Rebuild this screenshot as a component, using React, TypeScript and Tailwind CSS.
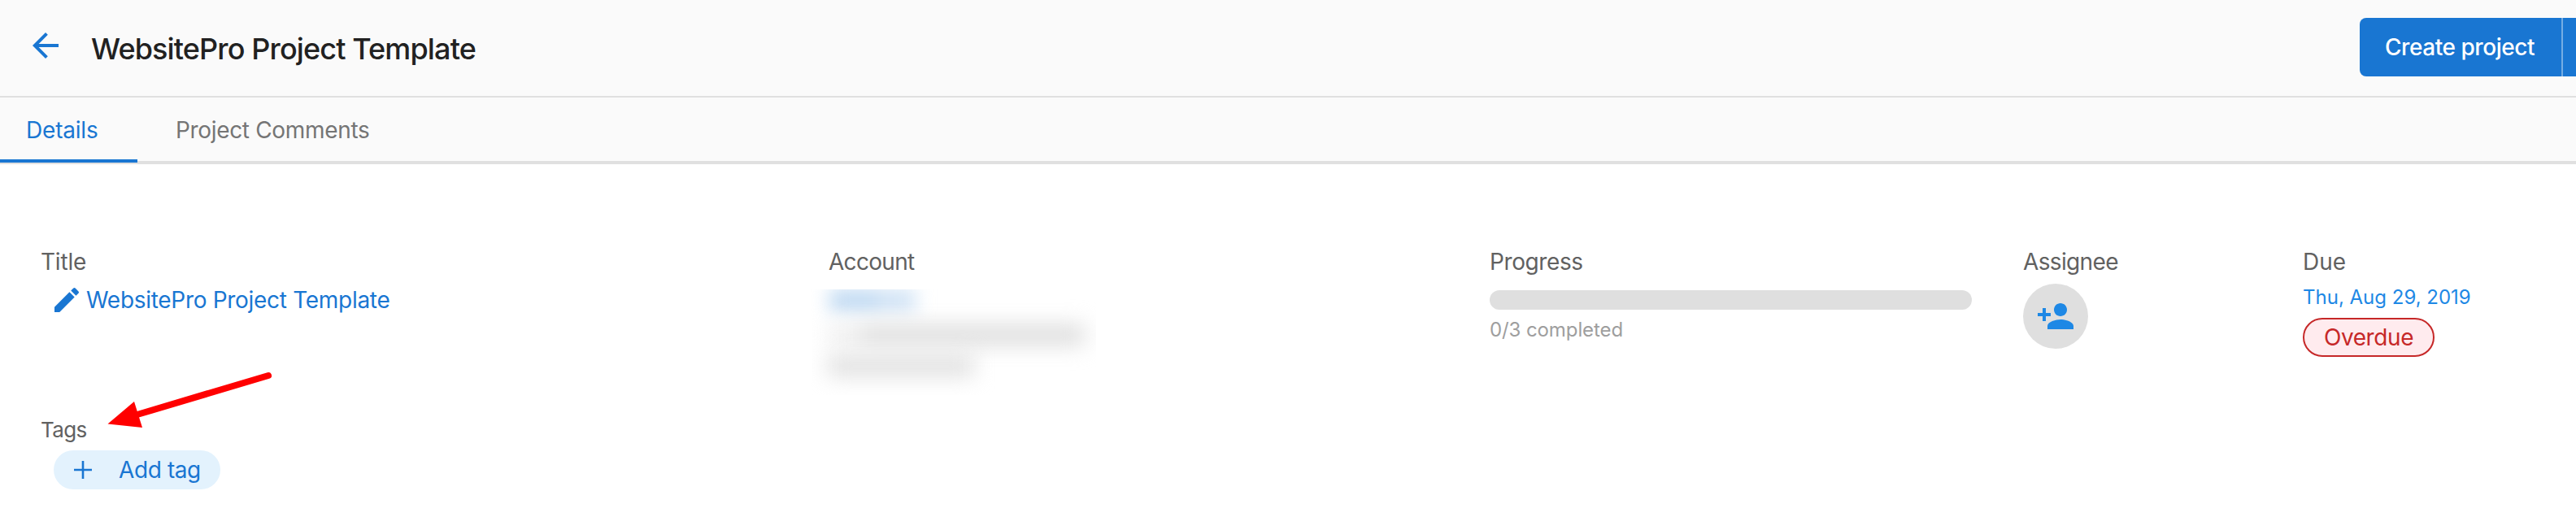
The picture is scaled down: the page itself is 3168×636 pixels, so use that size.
import type { ReactNode } from 'react';

function Field({ label, className, labelClassName = 'tracking-[-0.4px]', children }: { label: string; className: string; labelClassName?: string; children: ReactNode }) {
  return (
    <section className={`shrink-0 ${className}`}>
      <h2 className={`text-[28px] leading-7 text-[#616161] ${labelClassName}`}>{label}</h2>
      {children}
    </section>
  );
}

function BackIcon() {
  return (
    <svg viewBox="0 0 24 24" className="size-12 fill-[#1976d2]">
      <path d="M20 11H7.83l5.59-5.59L12 4l-8 8 8 8 1.41-1.41L7.83 13H20v-2z" />
    </svg>
  );
}

function EditIcon() {
  return (
    <svg viewBox="0 0 24 24" className="size-10 shrink-0 fill-[#1976d2]">
      <path d="M3 17.25V21h3.75L17.81 9.94l-3.75-3.75L3 17.25zM20.71 7.04a.996.996 0 0 0 0-1.41l-2.34-2.34a.996.996 0 0 0-1.41 0l-1.83 1.83 3.75 3.75 1.83-1.83z" />
    </svg>
  );
}

function PersonAddIcon() {
  return (
    <svg viewBox="0 0 24 24" className="size-12 fill-[#1e88e5]">
      <path d="M15 12c2.21 0 4-1.79 4-4s-1.79-4-4-4-4 1.79-4 4 1.79 4 4 4zm-9-2V7H4v3H1v2h3v3h2v-3h3v-2H6zm9 4c-2.67 0-8 1.34-8 4v2h16v-2c0-2.66-5.33-4-8-4z" />
    </svg>
  );
}

function Header() {
  return (
    <header className="flex h-[120px] items-start border-b-2 border-[#e0e0e0] bg-[#fafafa]">
      <button className="ml-8 mt-8" aria-label="Back">
        <BackIcon />
      </button>
      <h1 className="ml-8 mt-[42px] whitespace-nowrap text-[36px] font-[540] leading-9 tracking-[-0.87px] text-[#212121]">
        WebsitePro Project Template
      </h1>
      <div className="ml-auto mt-[22px] flex h-[72px] w-[266px] overflow-hidden rounded-l-lg bg-[#1976d2]">
        <button className="flex w-[248px] items-start whitespace-nowrap pl-[31px] pt-[22px] text-[28px] font-medium leading-7 tracking-[-0.45px] text-white">
          Create project
        </button>
        <span className="w-0.5 bg-[#75ade4]" />
      </div>
    </header>
  );
}

function Tabs() {
  return (
    <nav className="flex h-[82px] items-start border-b-4 border-[#e0e0e0] bg-[#fafafa] text-[28px] leading-7">
      <button className="h-20 w-[169px] shrink-0 border-b-4 border-[#1976d2] pl-8 pt-1 text-left tracking-[-0.2px] text-[#1976d2]">
        Details
      </button>
      <button className="ml-[47px] mt-[26px] whitespace-nowrap tracking-[-0.33px] text-[#757575]">Project Comments</button>
    </nav>
  );
}

export default function App() {
  return (
    <div className="h-[636px] w-[3168px] overflow-hidden bg-white font-['Inter',sans-serif]">
      <Header />
      <Tabs />
      <main className="relative pl-[50px] pt-[106px]">
        <div className="flex h-[207px] items-start">
          <Field label="Title" className="w-[969px]" labelClassName="tracking-[-0.2px]">
            <div className="ml-3 mt-[13px] flex items-start">
              <EditIcon />
              <a className="ml-1 mt-[6px] whitespace-nowrap text-[28px] leading-7 tracking-[-0.3px] text-[#1976d2]">
                WebsitePro Project Template
              </a>
            </div>
          </Field>
          <Field label="Account" className="w-[813px]" labelClassName="tracking-[-0.7px]">
            <div className="-ml-[21px] mt-5 h-[130px] w-[350px] overflow-hidden">
              <div className="ml-[22px] flex h-[27px] w-[106px] blur-[11px]">
                <div className="w-[60px] bg-[#bfd9f2]" />
                <div className="flex-1 bg-[#cfe2f5]" />
              </div>
              <div className="ml-5 mt-4 flex h-[26px] w-[316px] blur-[13px]">
                <div className="w-10 bg-[#efefef]" />
                <div className="flex-1 bg-[#dedede]" />
              </div>
              <div className="ml-5 mt-3 h-[26px] w-[180px] bg-[#e0e0e0] blur-[13px]" />
            </div>
          </Field>
          <Field label="Progress" className="w-[656px]">
            <div className="mt-[21px] h-6 w-[593px] rounded-full bg-[#dfdfdf]" />
            <p className="mt-[13px] text-2xl leading-6 tracking-[-0.1px] text-[#9e9e9e]">0/3 completed</p>
          </Field>
          <Field label="Assignee" className="w-[344px]" labelClassName="tracking-[-0.65px]">
            <button className="mt-[13px] flex size-20 items-center justify-center rounded-full bg-[#dfdfdf]" aria-label="Add assignee">
              <PersonAddIcon />
            </button>
          </Field>
          <Field label="Due" className="w-[300px]" labelClassName="tracking-normal">
            <p className="mt-[18px] text-2xl leading-6 text-[#1e88e5]">Thu, Aug 29, 2019</p>
            <div className="mt-[13px] flex h-12 w-[162px] justify-center rounded-full border-2 border-[#c62828] bg-[#ffebee] pt-2 text-[28px] leading-7 tracking-[-0.4px] text-[#c62828]">
              Overdue
            </div>
          </Field>
        </div>
        <section>
          <h2 className="pt-px text-[26px] leading-[26px] tracking-[-0.6px] text-[#616161]">Tags</h2>
          <button className="ml-4 mt-3 flex h-12 w-[205px] items-start rounded-full bg-[#e3f2fd] pl-[25px] pt-[10px] text-[28px] leading-7 tracking-[-0.4px] text-[#1976d2]">
            <svg viewBox="0 0 22 22" className="mt-[3px] size-[22px] fill-none stroke-[#1976d2] stroke-[2.6]">
              <path d="M11 0v22M0 11h22" />
            </svg>
            <span className="ml-[33px]">Add tag</span>
          </button>
        </section>
        <svg viewBox="130 452 210 80" className="absolute left-[130px] top-[250px] h-20 w-[210px]">
          <path d="M170.500 509.500L330 462" stroke="#f00" strokeWidth="8" strokeLinecap="round" />
          <path d="M132.500 521.500L165 494l10 32z" fill="#f00" />
        </svg>
      </main>
    </div>
  );
}
